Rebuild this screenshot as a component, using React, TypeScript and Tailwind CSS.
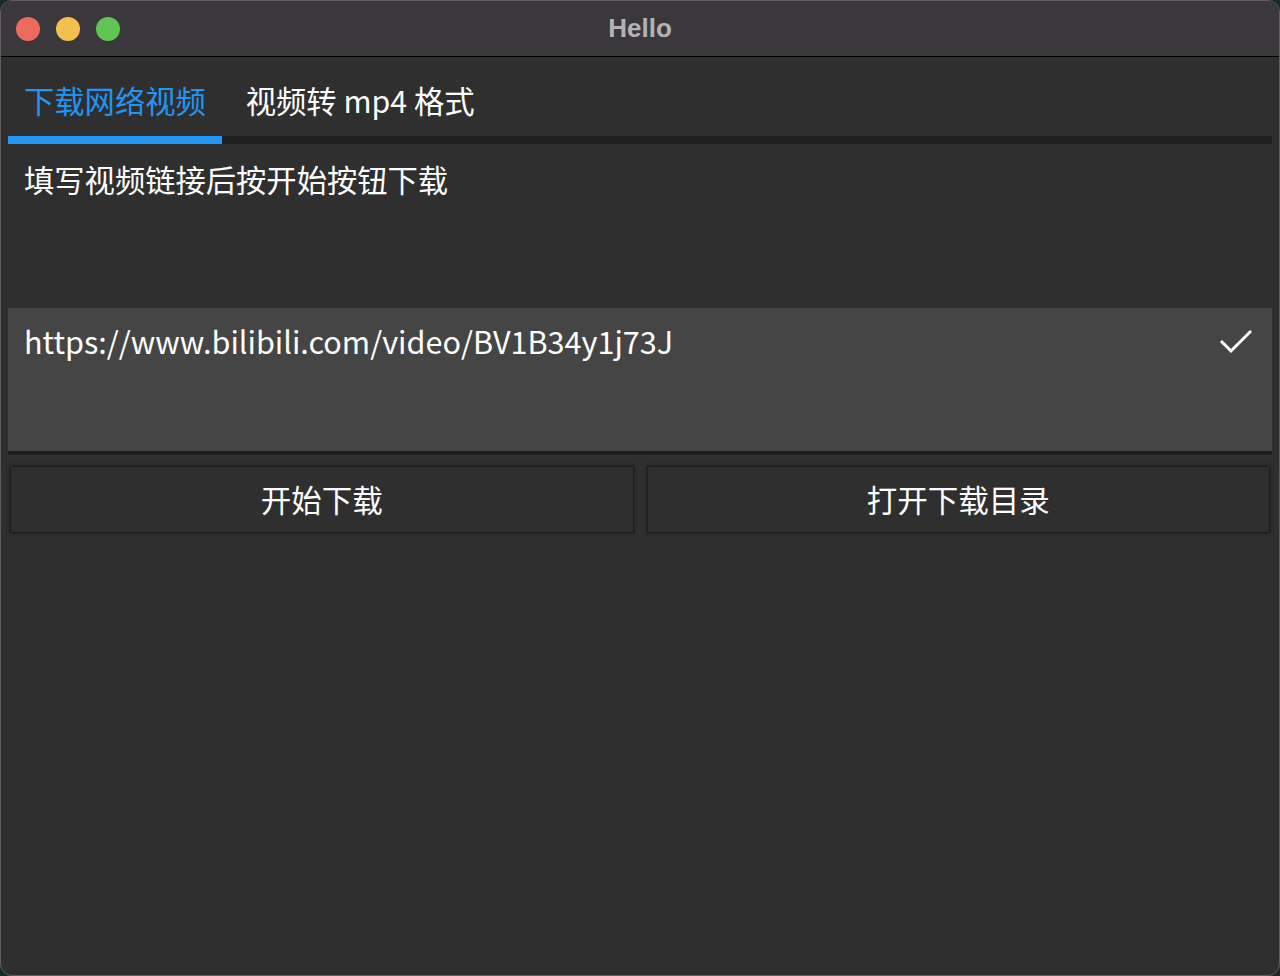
import React from 'react';

const cjk = { fontFamily: '"Noto Sans CJK SC", "Noto Sans", sans-serif' };

const App = () => {
    return (
        <div className="w-[1280px] h-[976px] bg-[#1b292d]" style={cjk}>
            <div className="w-full h-full rounded-[12px] border border-[#5f5f5f] overflow-hidden flex flex-col bg-[#2f2f2f]">
                {/* Title bar */}
                <div className="relative h-[56px] shrink-0 bg-[#3a383b] border-b border-black flex items-center">
                    <div className="flex items-center gap-4 pl-[15px]">
                        <span className="w-6 h-6 rounded-full bg-[#ed6a5e]" />
                        <span className="w-6 h-6 rounded-full bg-[#f4bf4f]" />
                        <span className="w-6 h-6 rounded-full bg-[#61c554]" />
                    </div>
                    <div
                        className="absolute inset-0 flex items-center justify-center text-[26px] font-bold text-[#b4b2b5]"
                        style={{ fontFamily: '"Liberation Sans", Arial, sans-serif' }}
                    >
                        Hello
                    </div>
                </div>

                <div className="px-[7px] flex flex-col">
                    {/* Tabs */}
                    <div className="flex h-[87px] items-end">
                        <div className="flex flex-col">
                            <div className="px-4 pb-[14px] text-[30.3px] leading-[44px] text-[#2196f3]">下载网络视频</div>
                            <div className="h-2 bg-[#2196f3]" />
                        </div>
                        <div className="flex-1 flex flex-col">
                            <div className="px-6 pb-[14px] text-[30.3px] leading-[44px] text-white">视频转 mp4 格式</div>
                            <div className="h-2 bg-[#1f1f1f]" />
                        </div>
                    </div>

                    {/* Hint */}
                    <div className="px-4 pt-[13px] h-[164px] text-[30.3px] leading-[44px] text-white">
                        填写视频链接后按开始按钮下载
                    </div>

                    {/* URL field */}
                    <div className="h-[147px] bg-[#454545] border-b-4 border-[#1e1e1e] flex justify-between px-4 pt-[11px]">
                        <div className="text-[30.6px] leading-[44px] text-white">https://www.bilibili.com/video/BV1B34y1j73J</div>
                        <svg width="32" height="26" viewBox="0 0 32 26" className="mt-[9px] mr-[4px]" fill="none">
                            <path d="M2 14 L11 23 L30 4" stroke="white" strokeWidth="3" strokeLinecap="square" />
                        </svg>
                    </div>

                    {/* Buttons */}
                    <div className="grid grid-cols-2 gap-[13px] px-[2px] pt-[11px]">
                        <button className="h-[67px] bg-[#2f2f2f] border border-[#1d1d1d] shadow-[0_0_4px_rgba(0,0,0,0.45)] text-[30.5px] text-white">
                            开始下载
                        </button>
                        <button className="h-[67px] bg-[#2f2f2f] border border-[#1d1d1d] shadow-[0_0_4px_rgba(0,0,0,0.45)] text-[30.5px] text-white">
                            打开下载目录
                        </button>
                    </div>
                </div>
            </div>
        </div>
    );
};

export default App;
